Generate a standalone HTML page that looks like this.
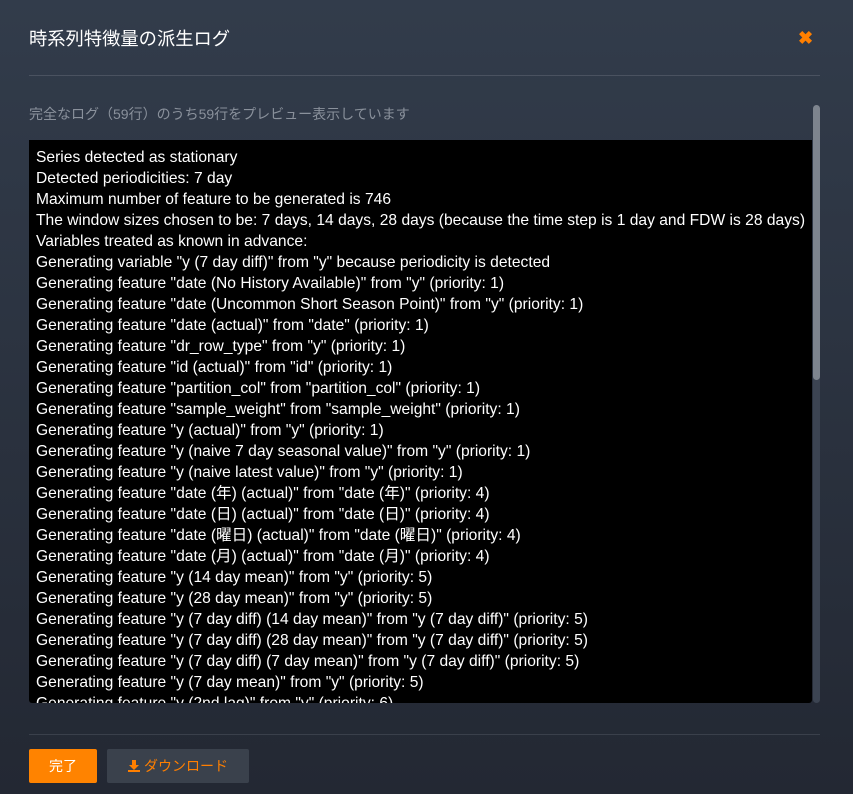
<!DOCTYPE html>
<html><head><meta charset="utf-8"><style>
html,body{margin:0;padding:0}
body{width:853px;height:794px;overflow:hidden;background:linear-gradient(#323c4b,#232833);font-family:"Liberation Sans","Noto Sans CJK JP",sans-serif;position:relative}
.title{position:absolute;left:29px;top:25px;color:#fff;font-size:18.3px}
.x{position:absolute;left:798px;top:28px;color:#ff7f00;font-size:18px;font-weight:bold}
.hr{position:absolute;left:29px;width:791px;height:1px;background:#4a5260}
.sub{position:absolute;left:29px;top:104px;color:#8a919c;font-size:14px}
.log{position:absolute;left:29px;top:140px;width:783px;height:563px;background:#000;overflow:hidden;border-radius:0 0 3px 3px}
.log div{color:#fff;font-size:15.6px;line-height:21px;white-space:nowrap;padding-left:7px;letter-spacing:0.01px}
.sb{position:absolute;left:813px;top:105px;width:7px;height:598px;background:#3c4452;border-radius:4px}
.th{position:absolute;left:813px;top:105px;width:7px;height:275px;background:#7d848e;border-radius:4px}
.b1{position:absolute;left:29px;top:749px;width:68px;height:34px;background:#ff8300;color:#fff;font-size:14px;text-align:center;line-height:34px;border-radius:2px}
.b2{position:absolute;left:107px;top:749px;width:142px;height:34px;background:#3a414c;color:#ff7f00;font-size:14px;text-align:center;line-height:34px;border-radius:2px}
</style></head><body>
<div class="title">時系列特徴量の派生ログ</div>
<div class="x">✖</div>
<div class="hr" style="top:75px"></div>
<div class="sub">完全なログ（59行）のうち59行をプレビュー表示しています</div>
<div class="sb"></div><div class="th"></div>
<div class="log" style="padding-top:7px;box-sizing:border-box">
<div>Series detected as stationary</div>
<div>Detected periodicities: 7 day</div>
<div>Maximum number of feature to be generated is 746</div>
<div>The window sizes chosen to be: 7 days, 14 days, 28 days (because the time step is 1 day and FDW is 28 days)</div>
<div>Variables treated as known in advance:</div>
<div>Generating variable "y (7 day diff)" from "y" because periodicity is detected</div>
<div>Generating feature "date (No History Available)" from "y" (priority: 1)</div>
<div>Generating feature "date (Uncommon Short Season Point)" from "y" (priority: 1)</div>
<div>Generating feature "date (actual)" from "date" (priority: 1)</div>
<div>Generating feature "dr_row_type" from "y" (priority: 1)</div>
<div>Generating feature "id (actual)" from "id" (priority: 1)</div>
<div>Generating feature "partition_col" from "partition_col" (priority: 1)</div>
<div>Generating feature "sample_weight" from "sample_weight" (priority: 1)</div>
<div>Generating feature "y (actual)" from "y" (priority: 1)</div>
<div>Generating feature "y (naive 7 day seasonal value)" from "y" (priority: 1)</div>
<div>Generating feature "y (naive latest value)" from "y" (priority: 1)</div>
<div>Generating feature "date (年) (actual)" from "date (年)" (priority: 4)</div>
<div>Generating feature "date (日) (actual)" from "date (日)" (priority: 4)</div>
<div>Generating feature "date (曜日) (actual)" from "date (曜日)" (priority: 4)</div>
<div>Generating feature "date (月) (actual)" from "date (月)" (priority: 4)</div>
<div>Generating feature "y (14 day mean)" from "y" (priority: 5)</div>
<div>Generating feature "y (28 day mean)" from "y" (priority: 5)</div>
<div>Generating feature "y (7 day diff) (14 day mean)" from "y (7 day diff)" (priority: 5)</div>
<div>Generating feature "y (7 day diff) (28 day mean)" from "y (7 day diff)" (priority: 5)</div>
<div>Generating feature "y (7 day diff) (7 day mean)" from "y (7 day diff)" (priority: 5)</div>
<div>Generating feature "y (7 day mean)" from "y" (priority: 5)</div>
<div>Generating feature "y (2nd lag)" from "y" (priority: 6)</div>
</div>
<div class="hr" style="top:734px;background:#3a404b"></div>
<div class="b1">完了</div>
<div class="b2"><svg width="12" height="12" viewBox="0 0 12 12" style="vertical-align:-1px;margin-right:4px"><path d="M4 0h4v5h3l-5 5-5-5h3z M0 10h12v2H0z" fill="#ff7f00"/></svg>ダウンロード</div>
</body></html>
